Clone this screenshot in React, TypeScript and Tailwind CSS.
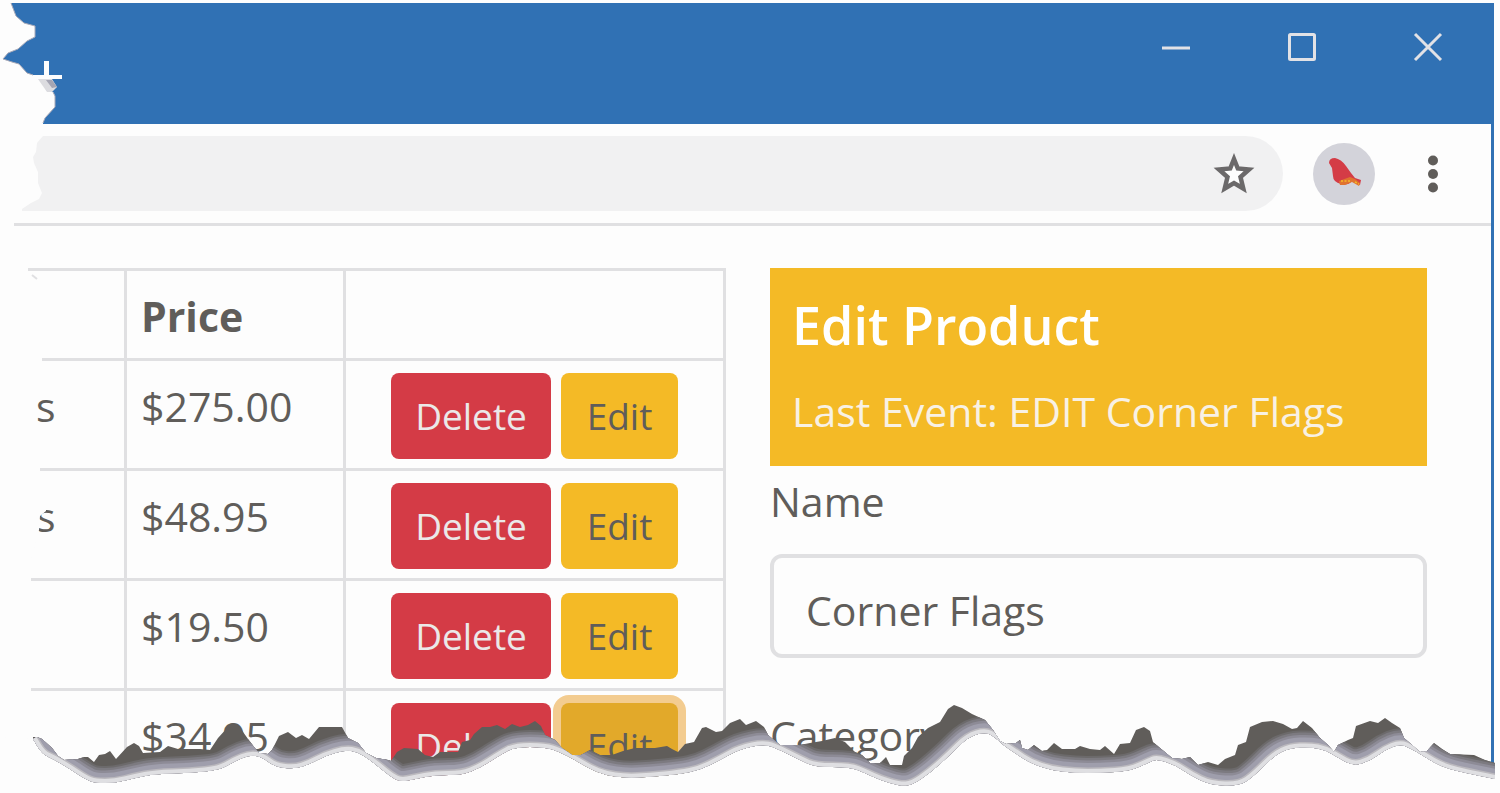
import React from "react";

const products = [
  { id: 1, nameEnd: "s", price: "$275.00" },
  { id: 2, nameEnd: "s", price: "$48.95" },
  { id: 3, nameEnd: "", price: "$19.50" },
  { id: 4, nameEnd: "", price: "$34.95", focused: true },
];

const ridge =
  "33,737 37,737 42,739 52,748 58,756 64,760 78,759 84,757 88,757 94,762 99,755 105,754 110,751 116,759 127,747 134,743 139,746 143,753 160,752 168,746 178,749 200,749 210,750 218,738 228,727 235,724 241,729 248,739 254,747 259,753 268,754 272,750 279,736 288,732 296,738 302,735 309,739 319,727 342,727 348,738 358,743 366,753 376,758 388,760 391,761 397,752 404,748 418,749 425,755 433,757 440,752 458,752 462,742 470,740 474,734 482,727 490,727 497,725 505,729 512,724 520,727 528,725 535,721 541,726 545,735 555,740 562,748 572,755 581,755 590,750 600,755 612,755 623,751 635,748 655,748 667,746 672,749 678,752 685,744 694,742 702,728 706,727 716,732 722,731 730,723 740,719 746,725 756,721 764,727 768,735 780,745 800,745 810,743 822,741 835,738 845,742 855,752 862,755 870,763 880,763 886,757 890,765 902,765 904,756 912,748 918,737 928,728 940,722 948,709 954,705 962,708 972,714 985,720 993,730 1000,741 1006,744 1016,743 1020,740 1022,748 1028,750 1034,745 1042,751 1047,750 1054,743 1062,749 1075,749 1080,746 1090,749 1100,750 1105,746 1114,754 1120,744 1130,743 1136,730 1144,727 1150,731 1153,742 1160,748 1172,758 1182,759 1190,757 1198,765 1208,762 1218,765 1225,759 1235,755 1238,745 1246,742 1250,727 1262,722 1273,721 1283,724 1292,729 1297,728 1303,721 1312,728 1320,738 1328,745 1334,752 1338,745 1348,740 1353,738 1356,726 1370,721 1378,723 1385,718 1392,723 1400,728 1404,738 1412,745 1420,752 1427,751 1434,743 1442,749 1450,754 1474,755 1485,760 1495,763";

const shore =
  "1495,779 1460,772 1440,766 1425,757 1412,749 1400,744 1385,750 1370,761 1353,766 1337,757 1325,750 1310,747 1290,748 1275,755 1255,775 1240,786 1210,785 1190,775 1175,765 1157,759 1150,762 1130,771 1100,773 1075,773 1050,770 1030,763 1015,753 1003,745 995,737 985,732 968,737 950,755 930,773 912,785 900,786 880,780 865,773 850,767 815,767 800,760 780,750 765,744 740,749 720,760 700,770 680,774 650,777 625,778 605,775 590,769 575,760 560,752 545,747 515,747 500,755 480,768 462,775 435,775 415,779 400,782 390,776 380,768 370,760 358,752 345,750 325,756 310,764 295,769 275,767 262,757 250,755 235,761 220,770 190,773 155,774 135,778 115,783 95,783 85,779 70,769 55,760 42,754 33,739";

function smooth(points: string) {
  const p = points.split(" ").map((s) => s.split(",").map(Number));
  let d = `M${p[0][0]} ${p[0][1]}`;
  for (let i = 1; i < p.length - 1; i++) {
    const mx = (p[i][0] + p[i + 1][0]) / 2;
    const my = (p[i][1] + p[i + 1][1]) / 2;
    d += `Q${p[i][0]} ${p[i][1]} ${mx} ${my}`;
  }
  const last = p[p.length - 1];
  return `${d}L${last[0]} ${last[1]}`;
}

const shorePath = smooth(shore);
const ridgePath = ridge
  .split(" ")
  .map((s) => `L${s.replace(",", " ")}`)
  .join("");

function BottomTear() {
  return (
    <svg
      aria-hidden="true"
      className="pointer-events-none absolute bottom-0 left-0 h-[93px] w-full"
      viewBox="0 700 1500 93"
      preserveAspectRatio="none"
    >
      <defs>
        <clipPath id="band">
          <path d={`${shorePath}${ridgePath}Z`} />
        </clipPath>
      </defs>
      <path d={`${shorePath}L0 737V793H1500V779Z`} fill="#fdfdfd" />
      <g clipPath="url(#band)" fill="none" strokeLinejoin="round">
        <rect x="0" y="700" width="1500" height="93" fill="#605d5a" />
        <path d={shorePath} stroke="#6c6a6b" strokeWidth="34" />
        <path d={shorePath} stroke="#7c7a80" strokeWidth="30" />
        <path d={shorePath} stroke="#8d8b96" strokeWidth="25" />
        <path d={shorePath} stroke="#9f9eac" strokeWidth="20" />
        <path d={shorePath} stroke="#bbb9be" strokeWidth="11" />
        <path d={shorePath} stroke="#dfdfe2" strokeWidth="8" />
      </g>
    </svg>
  );
}

function LeftTear() {
  return (
    <svg
      aria-hidden="true"
      className="pointer-events-none absolute left-0 top-0 h-[740px] w-20"
      viewBox="0 0 80 740"
    >
      <path
        d="M0 0H11V3L16 16L24 23L35 26V37L27 41L18 49L8 53L3 59L12 62L19 64L27 73L33 75H40V79L47 91L53 92L55 96V107L45 118L43 123V136L37 143L36 152L33 157L34 163L38 172V183L42 193L39 199L31 203L22 209V216H14V240L28 255V274L42 340V372L37 385V430L40 460V474L46 504V511L40 516L39 530L31 560V737H0Z"
        fill="#fdfdfd"
      />
      <path
        d="M11 3L16 16L24 23L35 26V37L27 41L18 49L8 53L3 59L12 62L19 64L27 73L33 75M53 92L55 96V107L45 118L43 123"
        fill="none"
        stroke="#a9aab8"
      />
      <path d="M38 79H52L57 87L52 92H47Z" fill="#dcdce0" />
      <path d="M46 80H52L57 87L52 88Z" fill="#a5a5b3" />
      <path d="M44 61H49V75H62V79H33V75H44Z" fill="#fdfdfd" />
      <path d="M32 275L37 279" stroke="#e0e0e2" strokeWidth="2" />
    </svg>
  );
}

function TitleBar() {
  return (
    <header className="flex h-[121px] items-start justify-end gap-[62px] bg-[#3071b4] pl-4 pr-[34px] pt-3 text-[#e2e2e6]">
      <button type="button" aria-label="Minimize" className="flex size-16 items-center justify-center">
        <svg width="30" height="30" viewBox="0 0 30 30">
          <path d="M1 16H29" stroke="currentColor" strokeWidth="3" />
        </svg>
      </button>
      <button type="button" aria-label="Maximize" className="flex size-16 items-center justify-center">
        <svg width="30" height="30" viewBox="0 0 30 30" fill="none">
          <rect x="2.5" y="2.5" width="25" height="25" rx="1" stroke="currentColor" strokeWidth="3" />
        </svg>
      </button>
      <button type="button" aria-label="Close" className="flex size-16 items-center justify-center">
        <svg width="30" height="30" viewBox="0 0 30 30">
          <path d="M2 2L28 28M28 2L2 28" stroke="currentColor" strokeWidth="3" />
        </svg>
      </button>
    </header>
  );
}

function Toolbar() {
  return (
    <div className="flex items-center border-b-3 border-[#e0e0e2] py-3 pr-12">
      <div className="flex h-[75px] flex-1 items-center justify-end rounded-r-full bg-[#f1f1f2] pr-7">
        <button type="button" aria-label="Bookmark this page">
          <svg width="42" height="42" viewBox="0 0 42 42">
            <path
              d="M21 6L24.800 15.500L36 16.500L27.500 24L30.300 35.500L21 30L11.700 35.500L14.500 24L6 16.500L17.200 15.500Z"
              fill="#fdfdfd"
              stroke="#6b696a"
              strokeWidth="4.500"
            />
          </svg>
        </button>
      </div>
      <button type="button" aria-label="Profile" className="ml-[30px] size-[62px] rounded-full bg-[#d3d3da]">
        <svg viewBox="0 0 62 62" className="size-full">
          <path
            d="M16 20Q16 15 22 15Q28 16 33 23L38 30L42 35L48 37L47 42L39 38Q35 43 28 41Q20 39 20 33L19 25Z"
            fill="#d43c46"
          />
          <path d="M26 38L37 34L42 36L47 40L46 43L39 39L32 42H27Z" fill="#e0732f" />
          <path d="M28 38H37M42 39L46 41" stroke="#f3ba28" strokeWidth="1.500" strokeDasharray="2 1.500" />
        </svg>
      </button>
      <button type="button" aria-label="Menu" className="ml-12">
        <svg width="20" height="42" viewBox="0 0 20 42" fill="#605d5a">
          <circle cx="10" cy="7.500" r="5" />
          <circle cx="10" cy="21" r="5" />
          <circle cx="10" cy="34.500" r="5" />
        </svg>
      </button>
    </div>
  );
}

function ProductTable() {
  const cell = "border-3 border-[#e0e0e2] align-top";
  return (
    <table className="w-full table-fixed border-collapse self-start text-left text-[41px] leading-[66px]">
      <colgroup>
        <col className="w-[14%]" />
        <col className="w-[219px]" />
        <col />
      </colgroup>
      <thead>
        <tr>
          <th className={`${cell} border-l-0`} />
          <th className={`${cell} px-3.5 pb-[9px] pt-3 font-bold`}>Price</th>
          <th className={cell} />
        </tr>
      </thead>
      <tbody>
        {products.map((p) => (
          <tr key={p.id}>
            <td className={`${cell} border-l-0 pb-[9px] pt-3 pl-2`}>{p.nameEnd}</td>
            <td className={`${cell} px-3.5 pb-[9px] pt-3`}>{p.price}</td>
            <td className={`${cell} pb-[9px] pt-3`}>
              <div className="flex justify-center gap-2.5 text-[37px]">
                <button type="button" className="h-[86px] w-40 rounded-lg bg-[#d43b46] text-[#ebe8e8]">
                  Delete
                </button>
                <button
                  type="button"
                  className={`h-[86px] w-[117px] rounded-lg ${
                    p.focused ? "bg-[#e2a92a] ring-8 ring-[#f3cc90]" : "bg-[#f4ba26]"
                  }`}
                >
                  Edit
                </button>
              </div>
            </td>
          </tr>
        ))}
      </tbody>
    </table>
  );
}

function EditPanel() {
  return (
    <section className="text-[41px] leading-[66px]">
      <div className="h-[198px] bg-[#f4ba26] px-[22px] pt-6 text-white">
        <h1 className="text-[52px] font-semibold">Edit Product</h1>
        <p className="mt-5 whitespace-nowrap text-[#f8f1e4]">Last Event: EDIT Corner Flags</p>
      </div>
      <form>
        <label htmlFor="name" className="block pt-0.5">
          Name
        </label>
        <input
          id="name"
          type="text"
          defaultValue="Corner Flags"
          className="mt-5 block h-26 w-full rounded-xl border-4 border-[#e0e0e2] bg-transparent px-8 pt-2 outline-none"
        />
        <label htmlFor="category" className="mt-11 block">
          Category
        </label>
        <input
          id="category"
          type="text"
          className="mt-5 block h-26 w-full rounded-xl border-4 border-[#e0e0e2] bg-transparent px-8 pt-2"
        />
      </form>
    </section>
  );
}

export default function App() {
  return (
    <div className="relative h-screen overflow-hidden bg-[#fdfdfd] pr-1.5 pt-[3px] font-['Open_Sans','Noto_Sans',sans-serif] text-[#605d5a]">
      <TitleBar />
      <div className="border-r-3 border-[#3071b4]">
        <Toolbar />
        <main className="grid grid-cols-[698fr_657fr] gap-11 pb-8 pl-7 pr-16 pt-[42px]">
          <ProductTable />
          <EditPanel />
        </main>
      </div>
      <LeftTear />
      <BottomTear />
    </div>
  );
}
